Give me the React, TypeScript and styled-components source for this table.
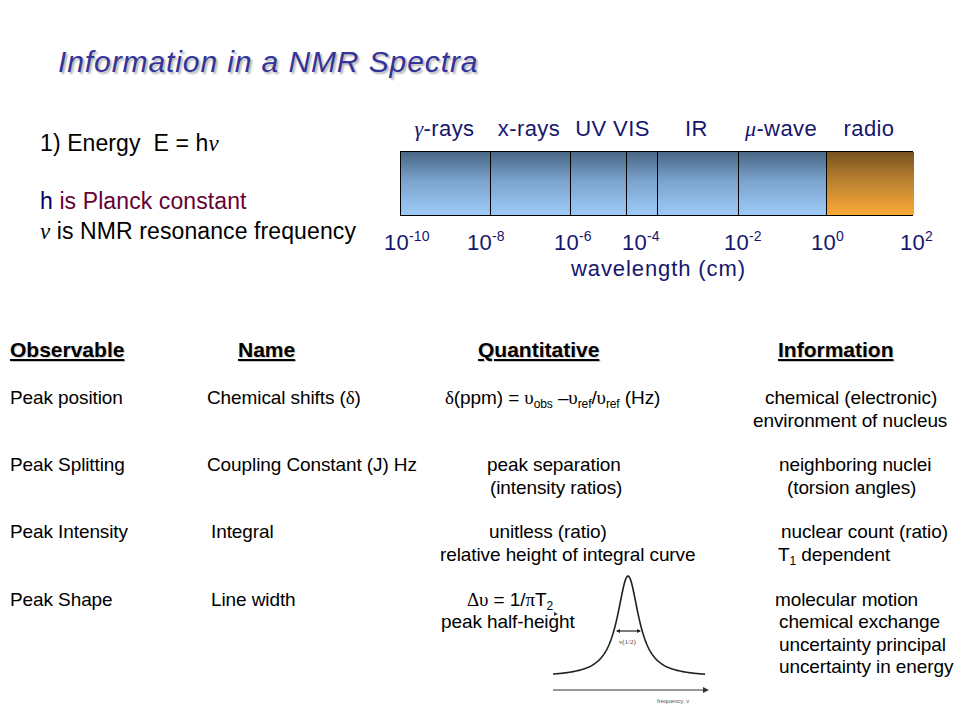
import React from "react";
import styled, { createGlobalStyle } from "styled-components";

const GlobalStyle = createGlobalStyle`
  body {
    margin: 0;
    background: #fff;
    font-family: "Liberation Sans", Arial, sans-serif;
  }
`;

const Slide = styled.div`
  position: relative;
  width: 960px;
  height: 720px;
  overflow: hidden;
  background: #fff;
  color: #000;
`;

const Title = styled.h1`
  margin: 0;
  padding: 44px 0 0 58px;
  height: 36px;
  font-size: 30px;
  line-height: 36px;
  font-style: italic;
  font-weight: normal;
  letter-spacing: 0.9px;
  color: #333399;
  text-shadow: 2px 2px 2px #b4b4b4;
`;

const TopRow = styled.div`
  display: flex;
  padding: 32px 0 0 40px;
`;

const EnergyBlock = styled.div`
  width: 344px;
  padding-top: 16px;
  font-size: 23px;
  line-height: 30px;
  letter-spacing: 0.1px;
`;

const EnergyLine = styled.div<{ $gap?: number }>`
  margin-top: ${(p) => p.$gap ?? 0}px;
  white-space: nowrap;
`;

const Greek = styled.span`
  font-family: "Liberation Serif", "Times New Roman", serif;
  font-style: italic;
`;

const Upright = styled.span`
  font-family: "Liberation Serif", "Times New Roman", serif;
`;

const Navy = styled.span`
  color: #000066;
`;

const Maroon = styled.span`
  color: #660033;
`;

const Spectrum = styled.div`
  padding-top: 5px;
  color: #16166e;
  font-size: 22px;
  letter-spacing: 0.4px;
`;

const segments = "89px 80px 56px 31px 81px 88px 88px";

const BandLabels = styled.div`
  display: grid;
  grid-template-columns: ${segments};
  margin-left: 16px;
  line-height: 24px;
  text-align: center;
  white-space: nowrap;
`;

const BandLabel = styled.div<{ $span?: number }>`
  grid-column: span ${(p) => p.$span ?? 1};
`;

const Bar = styled.div`
  display: grid;
  grid-template-columns: ${segments};
  margin: 10px 0 0 16px;
  width: 513px;
  height: 65px;
  border: 1px solid #000;
  box-sizing: border-box;
`;

const Segment = styled.div<{ $warm?: boolean }>`
  border-left: 1px solid #000;
  background: ${(p) =>
    p.$warm
      ? "linear-gradient(#77531f, #b9802f 45%, #fbaa38)"
      : "linear-gradient(#496685, #7aa2cc 45%, #9dcbf7)"};

  &:first-child {
    border-left: none;
  }
`;

const Scale = styled.div`
  display: grid;
  grid-template-columns: 83px 87px 68px 102px 87px 89px auto;
  margin-top: 14px;
  font-size: 22px;
  line-height: 26px;
  letter-spacing: 0.2px;
  white-space: nowrap;
`;

const Sup = styled.sup`
  font-size: 14px;
  vertical-align: 9px;
  line-height: 0;
`;

const Caption = styled.div`
  margin-top: 1px;
  padding-left: 187px;
  line-height: 24px;
  letter-spacing: 0.9px;
`;

const Table = styled.div`
  display: grid;
  grid-template-columns: 197px 233px 313px 1fr;
  row-gap: 22px;
  margin-top: 57px;
  padding-left: 10px;
  font-size: 19px;
  letter-spacing: -0.1px;
  white-space: nowrap;
`;

const Head = styled.div<{ $indent: number }>`
  padding-left: ${(p) => p.$indent}px;
  margin-bottom: 3px;
  font-size: 21px;
  line-height: 24px;
  font-weight: bold;
  text-decoration: underline;
  letter-spacing: 0;
  text-shadow: 1px 1px 1px #c8c8c8;
`;

const Cell = styled.div`
  display: flex;
  flex-direction: column;
`;

const Line = styled.div<{ $indent?: number }>`
  padding-left: ${(p) => p.$indent ?? 0}px;
  line-height: 22.6px;
  height: 22.6px;
`;

const Sub = styled.sub`
  font-size: 12px;
  vertical-align: -4px;
  line-height: 0;
`;

const Figure = styled.div`
  position: absolute;
  left: 553px;
  top: 573px;
  width: 157px;
  height: 133px;
`;

type L = [number, React.ReactNode];

const heads: [number, string][] = [
  [0, "Observable"],
  [31, "Name"],
  [38, "Quantitative"],
  [25, "Information"],
];

const U = () => <Upright>υ</Upright>;

const rows: L[][][] = [
  [
    [[0, "Peak position"]],
    [[0, <>Chemical shifts (<Upright>δ</Upright>)</>]],
    [
      [
        5,
        <>
          <Upright>δ</Upright>(ppm) = <U />
          <Sub>obs</Sub> –<U />
          <Sub>ref</Sub>/<U />
          <Sub>ref</Sub> (Hz)
        </>,
      ],
    ],
    [
      [12, "chemical (electronic)"],
      [0, "environment of nucleus"],
    ],
  ],
  [
    [[0, "Peak Splitting"]],
    [[0, "Coupling Constant (J) Hz"]],
    [
      [47, "peak separation"],
      [50, "(intensity ratios)"],
    ],
    [
      [26, "neighboring nuclei"],
      [34, "(torsion angles)"],
    ],
  ],
  [
    [[0, "Peak Intensity"]],
    [[4, "Integral"]],
    [
      [49, "unitless (ratio)"],
      [0, "relative height of integral curve"],
    ],
    [
      [28, "nuclear count (ratio)"],
      [25, <>T<Sub>1</Sub> dependent</>],
    ],
  ],
  [
    [[0, "Peak Shape"]],
    [[4, "Line width"]],
    [
      [27, <><Upright>Δυ</Upright> = 1/<Upright>π</Upright>T<Sub>2</Sub></>],
      [1, "peak half-height"],
    ],
    [
      [22, "molecular motion"],
      [26, "chemical exchange"],
      [26, "uncertainty principal"],
      [26, "uncertainty in energy"],
    ],
  ],
];

// lorentzian line, half width at half height 12.5px
function lorentz() {
  const pts: string[] = [];
  for (let x = 0; x <= 152; x += 1) {
    const g = 13;
    const y = 104 - (101 * g * g) / ((x - 75) * (x - 75) + g * g);
    pts.push(`${x},${y.toFixed(2)}`);
  }
  return pts.join(" ");
}

const PeakFigure = () => (
  <Figure>
    <svg width="157" height="133" viewBox="0 0 157 133">
      <polyline points={lorentz()} fill="none" stroke="#222" strokeWidth="1.6" />
      <line x1="0" y1="117" x2="150" y2="117" stroke="#333" strokeWidth="1.2" />
      <path d="M150 114 L156 117 L150 120 Z" fill="#333" />
      <line x1="64" y1="58" x2="87" y2="58" stroke="#222" strokeWidth="1.2" />
      <path d="M63 58 L67 56 L67 60 Z M88 58 L84 56 L84 60 Z" fill="#222" />
      <path d="M1 39 L5 41 L1 43 Z" fill="#333" />
      <text x="66" y="71" fontSize="7" fontFamily="Liberation Serif, serif" fill="#444">
        ν(1/2)
      </text>
      <text x="104" y="130" fontSize="6" fontFamily="Liberation Sans, sans-serif" fill="#555">
        frequency, ν
      </text>
    </svg>
  </Figure>
);

export default function App() {
  return (
    <Slide>
      <GlobalStyle />
      <Title>Information in a NMR Spectra</Title>
      <TopRow>
        <EnergyBlock>
          <EnergyLine>
            1) Energy&nbsp; E = h<Greek>ν</Greek>
          </EnergyLine>
          <EnergyLine $gap={27}>
            <Navy>h</Navy> <Maroon>is Planck constant</Maroon>
          </EnergyLine>
          <EnergyLine>
            <Greek>ν</Greek> is NMR resonance frequency
          </EnergyLine>
        </EnergyBlock>
        <Spectrum>
          <BandLabels>
            <BandLabel>
              <Greek>γ</Greek>-rays
            </BandLabel>
            <BandLabel>x-rays</BandLabel>
            <BandLabel $span={2}>UV VIS</BandLabel>
            <BandLabel>IR</BandLabel>
            <BandLabel>
              <Greek>μ</Greek>-wave
            </BandLabel>
            <BandLabel>radio</BandLabel>
          </BandLabels>
          <Bar>
            {[0, 1, 2, 3, 4, 5].map((i) => (
              <Segment key={i} />
            ))}
            <Segment $warm />
          </Bar>
          <Scale>
            {["-10", "-8", "-6", "-4", "-2", "0", "2"].map((e) => (
              <div key={e}>
                10<Sup>{e}</Sup>
              </div>
            ))}
          </Scale>
          <Caption>wavelength (cm)</Caption>
        </Spectrum>
      </TopRow>
      <Table>
        {heads.map(([indent, text]) => (
          <Head key={text} $indent={indent}>
            {text}
          </Head>
        ))}
        {rows.map((row, r) =>
          row.map((cell, c) => (
            <Cell key={`${r}-${c}`}>
              {cell.map(([indent, content], i) => (
                <Line key={i} $indent={indent}>
                  {content}
                </Line>
              ))}
            </Cell>
          ))
        )}
      </Table>
      <PeakFigure />
    </Slide>
  );
}
